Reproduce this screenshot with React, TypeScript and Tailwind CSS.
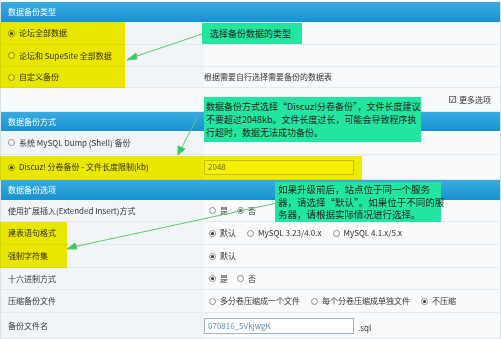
import type { ReactNode } from "react";

const FONT = '"Noto Sans CJK SC", "Liberation Sans", sans-serif';

function Radio({ checked = false }: { checked?: boolean }) {
  return (
    <span className="flex h-[7px] w-[7px] shrink-0 items-center justify-center rounded-full border border-[#8d8d8d] bg-white">
      {checked && <span className="h-[3px] w-[3px] rounded-full bg-[#333]" />}
    </span>
  );
}

function Opt({ checked = false, children }: { checked?: boolean; children: ReactNode }) {
  return (
    <span className="flex items-center gap-[4px]">
      <Radio checked={checked} />
      <span>{children}</span>
    </span>
  );
}

function Header({ title, h }: { title: string; h: string }) {
  return (
    <div
      className={`flex items-center bg-gradient-to-b from-[#38ace0] to-[#1791cf] px-[7px] text-[8px] text-white ${h}`}
    >
      {title}
    </div>
  );
}

function Row({ left, right, h }: { left?: ReactNode; right?: ReactNode; h: string }) {
  return (
    <div className={`grid grid-cols-[203px_1fr] border-b border-[#e4e9ed] ${h}`}>
      <div className="flex items-center bg-[#f2f5f8] pl-[7px]">{left}</div>
      <div className="flex items-center gap-[10px] bg-[#f9fafb]">{right}</div>
    </div>
  );
}

export default function App() {
  return (
    <div
      className="relative h-[339px] w-[501px] overflow-hidden bg-white text-[8px] text-[#333]"
      style={{ fontFamily: FONT }}
    >
      <div className="border-x border-[#d5e2ea] pt-[2px]">
        <Header title="数据备份类型" h="h-[20px]" />
        <Row h="h-[23px]" left={<Opt checked>论坛全部数据</Opt>} />
        <Row h="h-[22px]" left={<Opt>论坛和 SupeSite 全部数据</Opt>} />
        <Row h="h-[21px]" left={<Opt>自定义备份</Opt>} right={<span>根据需要自行选择需要备份的数据表</span>} />
        <div className="flex h-[24px] items-center justify-end border-b border-[#e4e9ed] bg-[#f9fafb] pr-[9px]">
          <span className="flex items-center gap-[3px]">
            <span className="flex h-[7px] w-[7px] items-center justify-center border border-[#777] bg-white text-[6px] leading-none">
              ✓
            </span>
            更多选项
          </span>
        </div>

        <Header title="数据备份方式" h="h-[19px]" />
        <Row h="h-[24px]" left={<Opt>系统 MySQL Dump (Shell) 备份</Opt>} />
        <Row
          h="h-[25px]"
          left={<Opt checked>Discuz! 分卷备份 - 文件长度限制(kb)</Opt>}
          right={
            <div className="flex h-[15px] w-[150px] items-center border border-[#cfc800] bg-white px-[3px] text-[#777]">
              2048
            </div>
          }
        />

        <Header title="数据备份选项" h="h-[20px]" />
        <Row
          h="h-[22px]"
          left="使用扩展插入(Extended Insert)方式"
          right={
            <div className="flex gap-[9px] pl-[5px]">
              <Opt>是</Opt>
              <Opt checked>否</Opt>
            </div>
          }
        />
        <Row
          h="h-[23px]"
          left="建表语句格式"
          right={
            <div className="flex gap-[11px] pl-[5px]">
              <Opt checked>默认</Opt>
              <Opt>MySQL 3.23/4.0.x</Opt>
              <Opt>MySQL 4.1.x/5.x</Opt>
            </div>
          }
        />
        <Row
          h="h-[23px]"
          left="强制字符集"
          right={
            <div className="flex pl-[5px]">
              <Opt checked>默认</Opt>
            </div>
          }
        />
        <Row
          h="h-[22px]"
          left="十六进制方式"
          right={
            <div className="flex gap-[9px] pl-[5px]">
              <Opt checked>是</Opt>
              <Opt>否</Opt>
            </div>
          }
        />
        <Row
          h="h-[23px]"
          left="压缩备份文件"
          right={
            <div className="flex gap-[11px] pl-[5px]">
              <Opt>多分卷压缩成一个文件</Opt>
              <Opt>每个分卷压缩成单独文件</Opt>
              <Opt checked>不压缩</Opt>
            </div>
          }
        />
        <Row
          h="h-[26px]"
          left="备份文件名"
          right={
            <div className="flex items-end gap-[4px]">
              <div className="flex h-[16px] w-[150px] items-center border border-[#9fb4c2] bg-white px-[3px] text-[#5a8fb0]">
                070816_5VkjwgK
              </div>
              <span>.sql</span>
            </div>
          }
        />
      </div>

      {/* yellow highlight marks */}
      <div className="pointer-events-none absolute left-0 top-[22px] h-[66px] w-[125px] bg-[#f6f100] mix-blend-multiply" />
      <div className="pointer-events-none absolute left-0 top-[156px] h-[24px] w-[362px] bg-[#f6f100] mix-blend-multiply" />
      <div className="pointer-events-none absolute left-0 top-[222px] h-[46px] w-[67px] bg-[#f6f100] mix-blend-multiply" />

      {/* arrows */}
      <svg className="pointer-events-none absolute left-0 top-0" width="501" height="339">
        <g stroke="#52cf72" strokeWidth="1" fill="#3fc462">
          <line x1="202" y1="34" x2="131" y2="58" />
          <polygon points="127,60 136,53 137,59" />
          <line x1="197" y1="118" x2="181" y2="149" />
          <polygon points="178,155 178,146 185,149" />
          <line x1="277" y1="203" x2="73" y2="247" />
          <polygon points="67,249 75,243 77,249" />
        </g>
      </svg>

      {/* callouts */}
      <div className="absolute left-[202px] top-[23px] flex h-[21px] w-[100px] items-center bg-[#22e6a0] pl-[8px] text-[9px] text-[#222]">
        选择备份数据的类型
      </div>
      <div className="absolute left-[204px] top-[97px] h-[45px] w-[217px] whitespace-nowrap bg-[#22e6a0] px-[2px] pt-[3px] text-[9px] leading-[13px] text-[#222]">
        数据备份方式选择“Discuz!分卷备份”，文件长度建议
        <br />
        不要超过2048kb。文件长度过长，可能会导致程序执
        <br />
        行超时，数据无法成功备份。
      </div>
      <div className="absolute left-[275px] top-[182px] h-[40px] w-[166px] whitespace-nowrap bg-[#22e6a0] px-[3px] pt-[1px] text-[9.5px] leading-[12.5px] text-[#222]">
        如果升级前后，站点位于同一个服务
        <br />
        器，请选择“默认”。如果位于不同的服
        <br />
        务器，请根据实际情况进行选择。
      </div>
    </div>
  );
}
